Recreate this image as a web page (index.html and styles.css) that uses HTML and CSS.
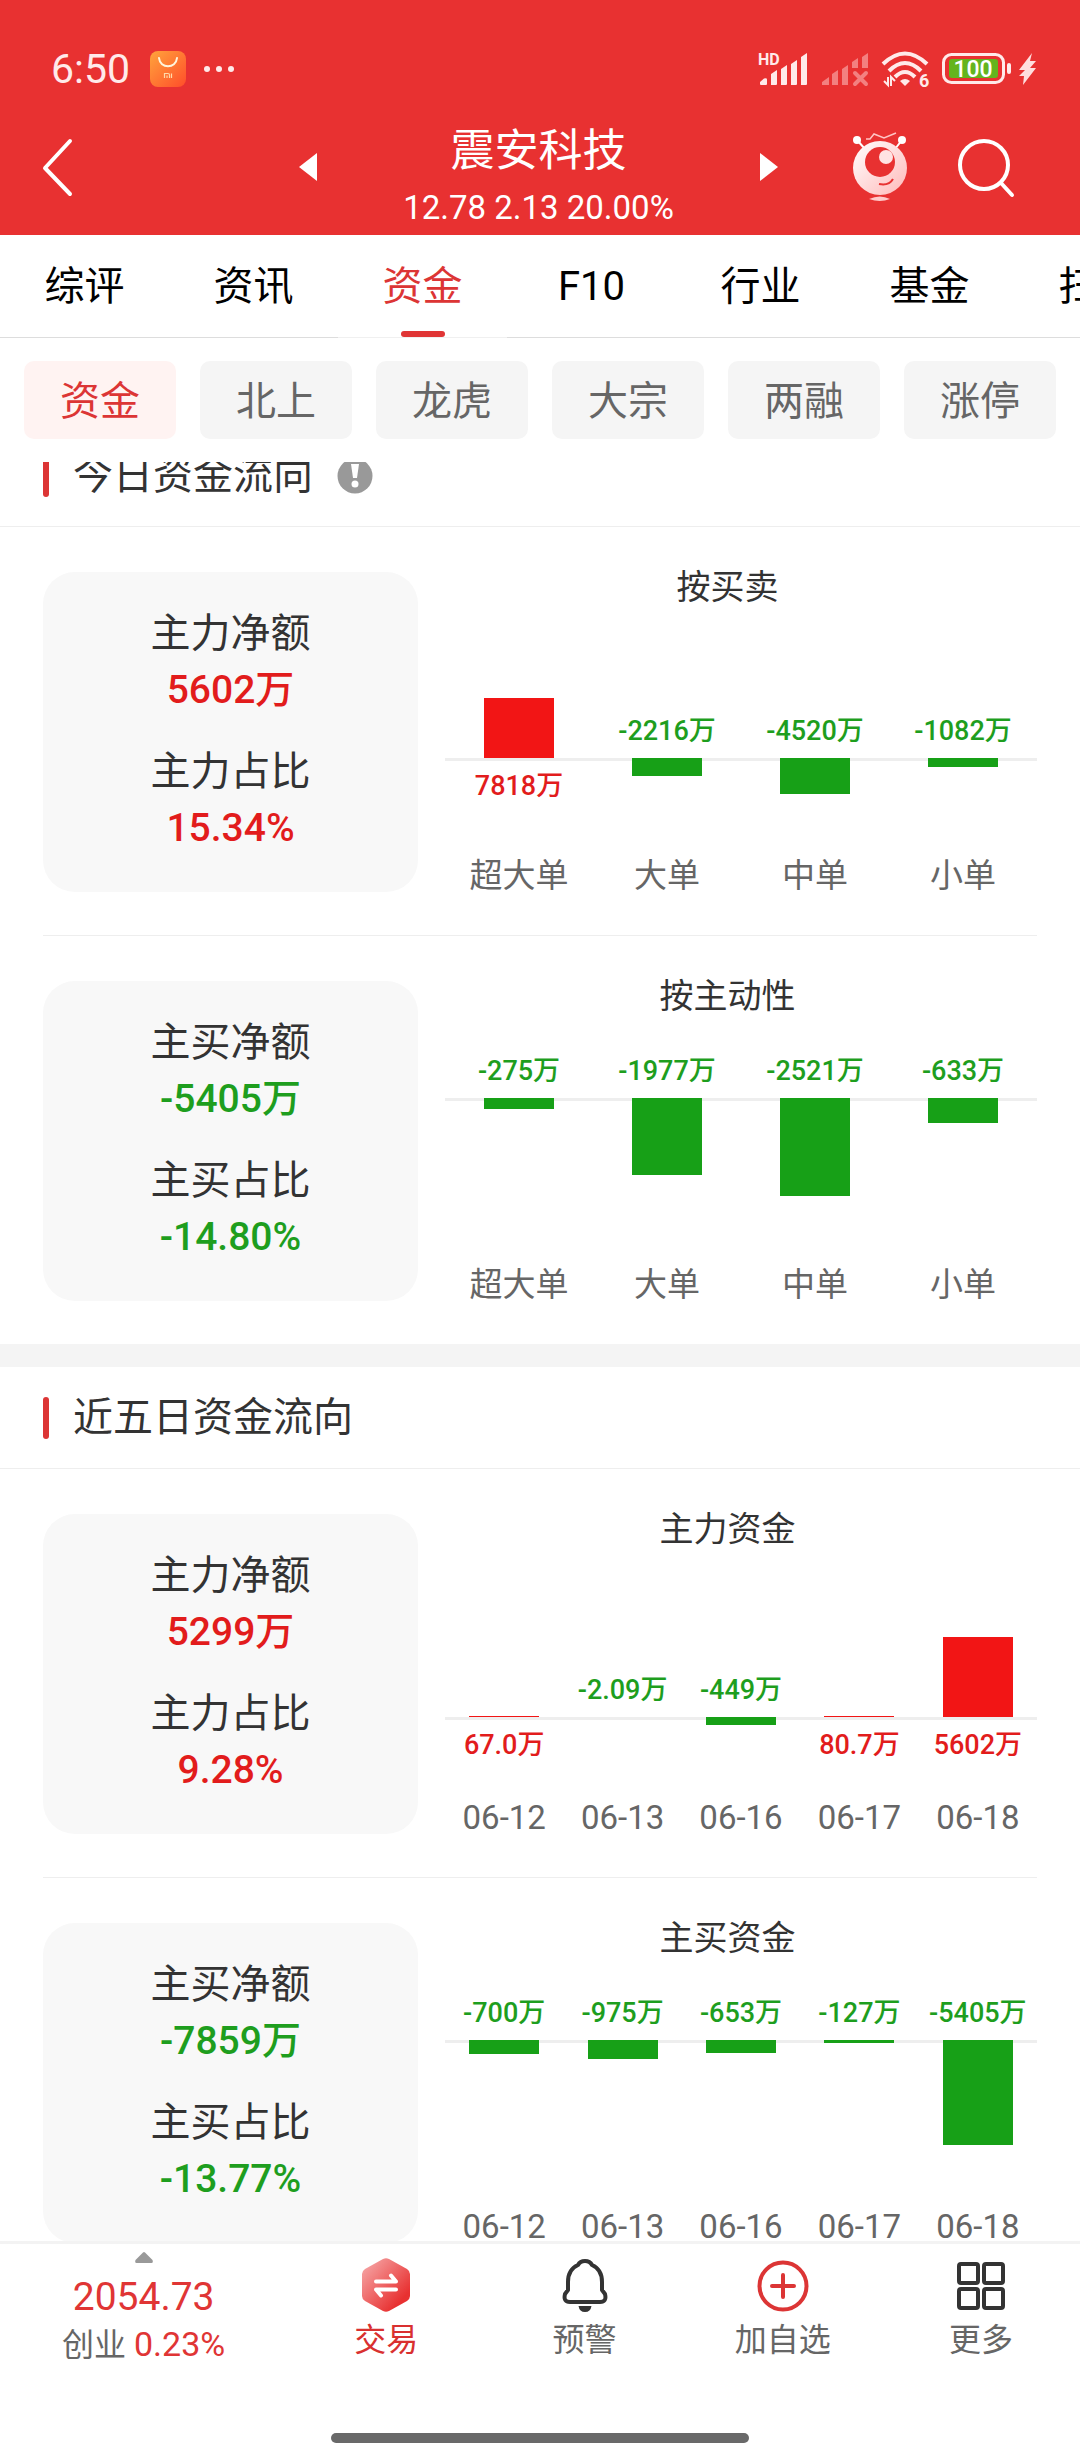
FILE: index.html
```html
<!DOCTYPE html>
<html lang="zh-CN">
<head>
    <meta charset="UTF-8">
    <meta name="viewport" content="width=device-width, initial-scale=1.0">
    <title>震安科技 - 资金</title>
    <link rel="stylesheet" href="styles.css">
</head>
<body>
    <header>
        <div class="status">
            <span class="time">6:50</span>
            <svg class="app" width="36" height="36" viewBox="0 0 36 36">
                <defs>
                    <linearGradient id="shop" x1="0" y1="0" x2="1" y2="1">
                        <stop offset="0" stop-color="#ffa43c"/>
                        <stop offset="1" stop-color="#ff4d2a"/>
                    </linearGradient>
                </defs>
                <rect width="36" height="36" rx="8" fill="url(#shop)"/>
                <path d="M9 7c1 11 17 11 18 0" fill="none" stroke="#fff5dc" stroke-width="2" stroke-linecap="round"/>
                <path d="M14.500 27v-4.500h3.500q1.500 0 1.500 1.500v3M17 24.500v2.500M21.500 22.500v4.500" fill="none" stroke="#ffd9a8" stroke-width="1.200"/>
            </svg>
            <svg width="32" height="8" viewBox="0 0 32 8" fill="#ffeaea">
                <circle cx="4" cy="4" r="3"/><circle cx="16" cy="4" r="3"/><circle cx="28" cy="4" r="3"/>
            </svg>
            <div class="status-right">
                <svg width="50" height="36" viewBox="0 0 50 36" fill="#ffeaea">
                    <text class="hd" x="0" y="14">HD</text>
                    <path d="M3 34q-1 0-1-1v-2l4-3.500q3-1 3 1v4.500q0 1-1 1zM13 34v-11l6-4v14q0 1-1 1zM23 34v-16l6-4v19q0 1-1 1zM33 34v-21l6-4v24q0 1-1 1zM43 34v-28l6-4v31q0 1-1 1z"/>
                </svg>
                <svg width="48" height="36" viewBox="0 0 48 36" fill="#f38080">
                    <path d="M1 34v-3l7-5v8zM11 34v-11l6-4v15zM21 34v-16l6-4v20zM31 17v-6l6-4v10zM41 17v-11l6-4v15z"/>
                    <path d="M34 22l11 11M45 22l-11 11" stroke="#f38080" stroke-width="4" stroke-linecap="round"/>
                </svg>
                <svg width="47" height="38" viewBox="0 0 47 38" fill="none" stroke="#ffeaea" stroke-width="4">
                    <path d="M1 14q22-21 44 0M7 21q16-16 32 0M13 27q10-10 20 0"/>
                    <path d="M18 31q5-4 10 0l-5 5z" fill="#ffeaea" stroke="none"/>
                    <path d="M2 31l4 4v-8M9 36v-9l4 4" stroke-width="2"/>
                    <text class="six" x="37" y="37">6</text>
                </svg>
                <svg class="battery" width="70" height="32" viewBox="0 0 70 32">
                    <rect x="1.500" y="1.500" width="60" height="28" rx="8" fill="none" stroke="#ffeaea" stroke-width="3"/>
                    <rect x="7" y="6" width="49" height="19" rx="3" fill="#64b41e"/>
                    <rect x="65" y="10" width="4" height="11" rx="2" fill="#ffeaea"/>
                    <text class="power" x="31" y="24">100</text>
                </svg>
                <svg class="bolt" width="18" height="32" viewBox="0 0 18 32" fill="#ffdede">
                    <path d="M14 0L1 17h6l-6 6h5l-1 9 13-17h-6l6-7h-6z"/>
                </svg>
            </div>
        </div>
        <nav class="title-bar">
            <button class="icon-btn back" aria-label="返回">
                <svg width="32" height="58" viewBox="0 0 32 58" fill="none" stroke="#fff" stroke-width="4" stroke-linecap="round" stroke-linejoin="round">
                    <path d="M28 3L3 30l25 26"/>
                </svg>
            </button>
            <div class="stock">
                <button class="icon-btn" aria-label="上一只">
                    <svg width="18" height="28" viewBox="0 0 18 28" fill="#fff"><path d="M18 0v28L0 14z"/></svg>
                </button>
                <div class="stock-name">
                    <h1>震安科技</h1>
                    <p>12.78 2.13 20.00%</p>
                </div>
                <button class="icon-btn" aria-label="下一只">
                    <svg width="18" height="28" viewBox="0 0 18 28" fill="#fff"><path d="M0 0v28l18-14z"/></svg>
                </button>
            </div>
            <div class="tools">
                <button class="icon-btn" aria-label="智能助手">
                    <svg width="54" height="70" viewBox="0 0 54 70">
                        <defs>
                            <linearGradient id="robot" x1="0" y1="0" x2="1" y2="1">
                                <stop offset="0" stop-color="#fff"/>
                                <stop offset="1" stop-color="#ffb9b9"/>
                            </linearGradient>
                        </defs>
                        <path d="M4 8l8 9M49 8l-7 9" stroke="#fff" stroke-width="2"/>
                        <circle cx="4" cy="8" r="4" fill="#fff"/>
                        <circle cx="49" cy="8" r="4" fill="#fff"/>
                        <path d="M13 7h4l4-5 10 4 12-5" fill="none" stroke="#ffc4c4" stroke-width="1.500"/>
                        <circle cx="27" cy="36" r="27" fill="url(#robot)"/>
                        <circle cx="27" cy="30" r="15" fill="#e83131"/>
                        <circle cx="33" cy="25" r="7" fill="#ffe3e3"/>
                        <path d="M26 52q10 2 14-5" fill="none" stroke="#e83131" stroke-width="2"/>
                        <path d="M16 67q11-5 21 0-10 4-21 0z" fill="#ffc9c9"/>
                    </svg>
                </button>
                <button class="icon-btn" aria-label="搜索">
                    <svg width="58" height="60" viewBox="0 0 58 60" fill="none" stroke="#fff" stroke-width="4" stroke-linecap="round">
                        <circle cx="27" cy="28" r="24"/><path d="M44 46l11 12"/>
                    </svg>
                </button>
            </div>
        </nav>
    </header>

    <nav class="tabs">
        <a href="#">综评</a>
        <a href="#">资讯</a>
        <a href="#" class="active">资金</a>
        <a href="#">F10</a>
        <a href="#">行业</a>
        <a href="#">基金</a>
        <a href="#">扫雷</a>
    </nav>

    <div class="chips">
        <button class="active">资金</button>
        <button>北上</button>
        <button>龙虎</button>
        <button>大宗</button>
        <button>两融</button>
        <button>涨停</button>
    </div>

    <main>
        <section class="today">
            <div class="section-head">
                <h2>今日资金流向</h2>
                <button class="icon-btn info" aria-label="说明">
                    <svg width="36" height="36" viewBox="0 0 36 36">
                        <circle cx="18" cy="18" r="17.500" fill="#999"/>
                        <path d="M14 6h8l-2 14h-4z" fill="#fff"/>
                        <circle cx="18" cy="26" r="3.500" fill="#fff"/>
                    </svg>
                </button>
            </div>
            <div class="row">
                <dl class="card">
                    <div><dt>主力净额</dt><dd class="red">5602万</dd></div>
                    <div><dt>主力占比</dt><dd class="red">15.34%</dd></div>
                </dl>
                <figure class="chart">
                    <figcaption>按买卖</figcaption>
                    <div class="cols" style="--rise: 156px">
                        <div class="col">
                            <div class="up"><div class="bar bar-red" style="height: 60px"></div></div>
                            <div class="down"><span class="val red">7818万</span></div>
                            <div class="name">超大单</div>
                        </div>
                        <div class="col">
                            <div class="up"><span class="val green">-2216万</span></div>
                            <div class="down"><div class="bar" style="height: 18px"></div></div>
                            <div class="name">大单</div>
                        </div>
                        <div class="col">
                            <div class="up"><span class="val green">-4520万</span></div>
                            <div class="down"><div class="bar" style="height: 36px"></div></div>
                            <div class="name">中单</div>
                        </div>
                        <div class="col">
                            <div class="up"><span class="val green">-1082万</span></div>
                            <div class="down"><div class="bar" style="height: 9px"></div></div>
                            <div class="name">小单</div>
                        </div>
                    </div>
                </figure>
            </div>
            <div class="row">
                <dl class="card">
                    <div><dt>主买净额</dt><dd class="green">-5405万</dd></div>
                    <div><dt>主买占比</dt><dd class="green">-14.80%</dd></div>
                </dl>
                <figure class="chart">
                    <figcaption>按主动性</figcaption>
                    <div class="cols" style="--rise: 87px">
                        <div class="col">
                            <div class="up"><span class="val green">-275万</span></div>
                            <div class="down"><div class="bar" style="height: 11px"></div></div>
                            <div class="name">超大单</div>
                        </div>
                        <div class="col">
                            <div class="up"><span class="val green">-1977万</span></div>
                            <div class="down"><div class="bar" style="height: 77px"></div></div>
                            <div class="name">大单</div>
                        </div>
                        <div class="col">
                            <div class="up"><span class="val green">-2521万</span></div>
                            <div class="down"><div class="bar" style="height: 98px"></div></div>
                            <div class="name">中单</div>
                        </div>
                        <div class="col">
                            <div class="up"><span class="val green">-633万</span></div>
                            <div class="down"><div class="bar" style="height: 25px"></div></div>
                            <div class="name">小单</div>
                        </div>
                    </div>
                </figure>
            </div>
        </section>

        <section class="recent">
            <div class="section-head">
                <h2>近五日资金流向</h2>
            </div>
            <div class="row">
                <dl class="card">
                    <div><dt>主力净额</dt><dd class="red">5299万</dd></div>
                    <div><dt>主力占比</dt><dd class="red">9.28%</dd></div>
                </dl>
                <figure class="chart">
                    <figcaption>主力资金</figcaption>
                    <div class="cols" style="--rise: 173px">
                        <div class="col">
                            <div class="up"><div class="bar bar-red" style="height: 1px"></div></div>
                            <div class="down"><span class="val red">67.0万</span></div>
                            <div class="name">06-12</div>
                        </div>
                        <div class="col">
                            <div class="up"><span class="val green">-2.09万</span></div>
                            <div class="down"></div>
                            <div class="name">06-13</div>
                        </div>
                        <div class="col">
                            <div class="up"><span class="val green">-449万</span></div>
                            <div class="down"><div class="bar" style="height: 8px"></div></div>
                            <div class="name">06-16</div>
                        </div>
                        <div class="col">
                            <div class="up"><div class="bar bar-red" style="height: 1px"></div></div>
                            <div class="down"><span class="val red">80.7万</span></div>
                            <div class="name">06-17</div>
                        </div>
                        <div class="col">
                            <div class="up"><div class="bar bar-red" style="height: 80px"></div></div>
                            <div class="down"><span class="val red">5602万</span></div>
                            <div class="name">06-18</div>
                        </div>
                    </div>
                </figure>
            </div>
            <div class="row">
                <dl class="card">
                    <div><dt>主买净额</dt><dd class="green">-7859万</dd></div>
                    <div><dt>主买占比</dt><dd class="green">-13.77%</dd></div>
                </dl>
                <figure class="chart">
                    <figcaption>主买资金</figcaption>
                    <div class="cols" style="--rise: 87px">
                        <div class="col">
                            <div class="up"><span class="val green">-700万</span></div>
                            <div class="down"><div class="bar" style="height: 14px"></div></div>
                            <div class="name">06-12</div>
                        </div>
                        <div class="col">
                            <div class="up"><span class="val green">-975万</span></div>
                            <div class="down"><div class="bar" style="height: 19px"></div></div>
                            <div class="name">06-13</div>
                        </div>
                        <div class="col">
                            <div class="up"><span class="val green">-653万</span></div>
                            <div class="down"><div class="bar" style="height: 13px"></div></div>
                            <div class="name">06-16</div>
                        </div>
                        <div class="col">
                            <div class="up"><span class="val green">-127万</span></div>
                            <div class="down"><div class="bar" style="height: 3px"></div></div>
                            <div class="name">06-17</div>
                        </div>
                        <div class="col">
                            <div class="up"><span class="val green">-5405万</span></div>
                            <div class="down"><div class="bar" style="height: 105px"></div></div>
                            <div class="name">06-18</div>
                        </div>
                    </div>
                </figure>
            </div>
        </section>
    </main>

    <footer>
        <div class="toolbar">
            <a href="#" class="index">
                <svg width="18" height="11" viewBox="0 0 18 11" fill="#999"><path d="M8 .500q1-1 2 0l7.500 7.500q1 3-1 3h-15q-2 0-1-3z"/></svg>
                <strong>2054.73</strong>
                <span>创业 <em>0.23%</em></span>
            </a>
            <a href="#" class="item trade">
                <svg width="54" height="54" viewBox="0 0 54 54">
                    <defs>
                        <linearGradient id="hex" x1="0" y1="0" x2="1" y2="1">
                            <stop offset="0" stop-color="#f7b0b0"/>
                            <stop offset=".8" stop-color="#e83131"/>
                        </linearGradient>
                    </defs>
                    <path d="M24 1q3-1.500 6 0l18 10q3 2 3 5v22q0 3-3 5l-18 10q-3 1.500-6 0L6 43q-3-2-3-5V16q0-3 3-5z" fill="url(#hex)"/>
                    <path d="M17 23.500h20l-5-6M37 31.500H17l5 6" fill="none" stroke="#fff" stroke-width="4" stroke-linecap="round" stroke-linejoin="round"/>
                </svg>
                <span>交易</span>
            </a>
            <a href="#" class="item">
                <svg width="54" height="54" viewBox="0 0 54 54" fill="none" stroke="#333" stroke-width="4" stroke-linejoin="round">
                    <path d="M20 7q2-4 7-4t7 4c7 3 10 10 10 17v8l3 4q2 8-5 8H12q-7 0-5-8l3-4v-8c0-7 3-14 10-17z"/>
                    <path d="M20.500 48h13q-1 6-6.500 6t-6.500-6z" fill="#333" stroke="none"/>
                </svg>
                <span>预警</span>
            </a>
            <a href="#" class="item">
                <svg width="54" height="54" viewBox="0 0 54 54" fill="none" stroke="#dc3535" stroke-width="4" stroke-linecap="round">
                    <circle cx="27" cy="28" r="23.500"/><path d="M16 28h22M27 17v22"/>
                </svg>
                <span>加自选</span>
            </a>
            <a href="#" class="item">
                <svg width="54" height="54" viewBox="0 0 54 54" fill="none" stroke="#333" stroke-width="4">
                    <rect x="5" y="6" width="19" height="19" rx="2"/><rect x="30" y="6" width="19" height="19" rx="2"/>
                    <rect x="5" y="31" width="19" height="19" rx="2"/><rect x="30" y="31" width="19" height="19" rx="2"/>
                </svg>
                <span>更多</span>
            </a>
        </div>
        <div class="home-bar"></div>
    </footer>
</body>
</html>
```

FILE: styles.css
```css
* {
    box-sizing: border-box;
}
body {
    margin: 0;
    height: 100vh;
    display: flex;
    flex-direction: column;
    overflow: hidden;
    font-family: Roboto, "Noto Sans CJK SC", sans-serif;
    font-size: 40px;
    color: #333;
    background-color: #fff;
}
h1, h2, p, dl, dd, figure {
    margin: 0;
    font-weight: normal;
}
a {
    color: inherit;
    text-decoration: none;
}
button {
    font: inherit;
    color: inherit;
    border: none;
    padding: 0;
    background: none;
    cursor: pointer;
}
svg {
    display: block;
    flex: none;
    overflow: visible;
}
.red {
    color: #e21c1c;
}
.green {
    color: #1e9e1e;
}

/* header */
header {
    background-color: #e83131;
    color: #fff;
}
.status {
    display: flex;
    align-items: center;
    height: 99px;
    padding: 38px 44px 0 51px;
}
.time {
    font-size: 41px;
    color: #ffeaea;
}
.app {
    margin: 0 17px 0 20px;
}
.status-right {
    display: flex;
    align-items: center;
    gap: 13px;
    margin-left: auto;
}
.bolt {
    margin-left: -7px;
}
.hd, .six, .power {
    font-family: Roboto, sans-serif;
    font-weight: bold;
    fill: #ffeaea;
    stroke: none;
}
.hd {
    font-size: 16px;
}
.six {
    font-size: 18px;
}
.power {
    font-size: 23px;
    font-weight: 500;
    text-anchor: middle;
    fill: #fff;
}
.title-bar {
    display: grid;
    grid-template-columns: 28% 1fr 28%;
    align-items: center;
}
.back {
    justify-self: start;
    padding-left: 42px;
}
.stock {
    display: flex;
    align-items: center;
    justify-content: space-between;
    margin-left: -3px;
}
.stock-name {
    padding: 26px 0 6px;
    text-align: center;
}
.stock-name h1 {
    font-size: 44px;
    line-height: 52px;
    margin-bottom: 10px;
}
.stock-name p {
    font-size: 33px;
    line-height: 42px;
}
.tools {
    display: flex;
    align-items: center;
    justify-content: flex-end;
    gap: 50px;
    padding-right: 65px;
}

/* tabs */
.tabs {
    display: flex;
    overflow: hidden;
    flex: none;
    color: #000;
}
.tabs a {
    flex: 0 0 169px;
    height: 103px;
    padding-top: 2px;
    line-height: 100px;
    text-align: center;
    white-space: nowrap;
    border-bottom: 1px solid #ddd;
}
.tabs .active {
    display: flex;
    flex-direction: column;
    align-items: center;
    color: #dc3535;
    border-color: #f0f0f0;
}
.tabs .active::after {
    content: "";
    width: 44px;
    height: 6px;
    margin-top: -6px;
    border-radius: 3px;
    background-color: #e03535;
}
.chips {
    display: flex;
    flex: none;
    gap: 24px;
    padding: 23px 24px;
}
.chips button {
    flex: 1;
    height: 78px;
    padding-bottom: 4px;
    border-radius: 10px;
    color: #666;
    background-color: #f5f5f5;
}
.chips .active {
    color: #dc3535;
    background-color: #fff3f2;
}

/* content */
main {
    flex: 1;
    min-height: 0;
    overflow: hidden;
}
/* list is scrolled a little under the chips */
.today {
    margin-top: -37px;
}
.recent {
    border-top: 23px solid #f4f4f4;
}
.section-head {
    display: flex;
    align-items: center;
    height: 102px;
    padding: 0 43px;
    border-bottom: 1px solid #eee;
}
.section-head::before {
    content: "";
    width: 6px;
    height: 42px;
    margin-right: 24px;
    border-radius: 3px;
    background-color: #dc3535;
}
.section-head h2 {
    font-size: 40px;
    line-height: 48px;
}
.info {
    margin-left: 24px;
}
.row {
    display: grid;
    grid-template-columns: 375fr 592fr;
    gap: 27px;
    margin: 0 43px;
    padding: 45px 0 43px;
    border-bottom: 1px solid #eee;
}
.row:last-child {
    border-bottom: none;
}
.card {
    padding: 34px 0 36px;
    border-radius: 32px;
    background-color: #f8f8f8;
    text-align: center;
    line-height: 56px;
}
.card div + div {
    margin-top: 26px;
}
.card dd {
    font-size: 39px;
    font-weight: 500;
}

/* bar charts, --rise is the room above the zero line */
.chart {
    display: flex;
    flex-direction: column;
}
.chart figcaption {
    padding-right: 27px;
    font-size: 34px;
    line-height: 30px;
    text-align: center;
}
.cols {
    flex: 1;
    display: flex;
}
.col {
    flex: 1;
    display: flex;
    flex-direction: column;
}
.up, .down {
    display: flex;
    flex-direction: column;
    align-items: center;
}
.up {
    height: var(--rise);
    justify-content: flex-end;
}
.down {
    flex: 1;
    box-shadow: inset 0 3px #eee;
}
.bar {
    width: 70px;
    background-color: #17a017;
}
.bar-red {
    background-color: #f21515;
}
.val {
    margin: 13px 0 12px;
    font-size: 27px;
    font-weight: 500;
    line-height: 30px;
    white-space: nowrap;
}
.name {
    margin-bottom: -2px;
    font-size: 33px;
    line-height: 36px;
    text-align: center;
    color: #666;
}

/* bottom bar */
footer {
    flex: none;
    border-top: 3px solid #f3f3f3;
    background-color: #fff;
    color: #666;
}
.toolbar {
    display: flex;
    height: 189px;
    font-size: 32px;
    line-height: 36px;
}
.index, .item {
    display: flex;
    flex-direction: column;
    align-items: center;
}
.index {
    flex: 287;
    padding-top: 8px;
}
.index strong {
    margin: 12px 0 7px;
    font-size: 39px;
    font-weight: normal;
    line-height: 44px;
    color: #e03535;
}
.index em {
    font-size: 34px;
    font-style: normal;
    color: #e03535;
}
.item {
    flex: 198;
    gap: 10px;
    padding-top: 14px;
}
.trade {
    color: #d93030;
}
.home-bar {
    width: 418px;
    height: 10px;
    margin: 0 auto 17px;
    border-radius: 5px;
    background-color: #696969;
}
```
